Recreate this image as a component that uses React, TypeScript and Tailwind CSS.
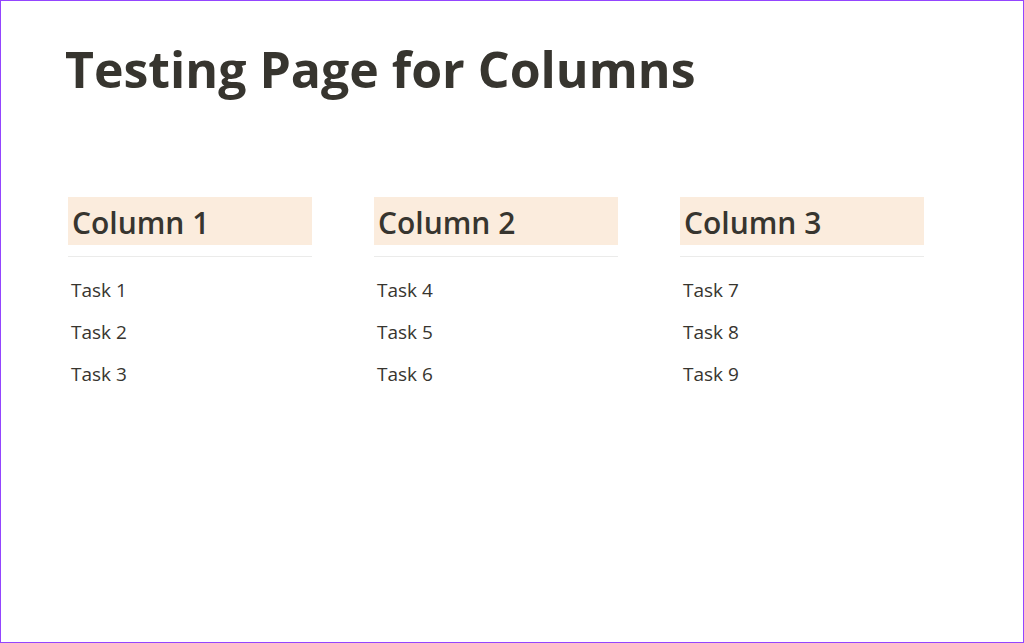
export default function App() {
	const columns = [
		{ title: 'Column 1', tasks: ['Task 1', 'Task 2', 'Task 3'] },
		{ title: 'Column 2', tasks: ['Task 4', 'Task 5', 'Task 6'] },
		{ title: 'Column 3', tasks: ['Task 7', 'Task 8', 'Task 9'] },
	]

	return (
		<div
			className="w-[1024px] h-[643px] bg-white border-[1.5px] border-[#9445ff] text-[#37352f] overflow-hidden"
			style={{ fontFamily: '"Open Sans", "Noto Sans", sans-serif' }}
		>
			<div className="pl-[64px] pt-[38px]">
				<h1 className="text-[50px] font-bold leading-[1.2]">Testing Page for Columns</h1>
			</div>

			<div className="flex gap-[62px] pl-[67px] pt-[98px]">
				{columns.map((col) => (
					<div key={col.title} className="w-[244px]">
						<div className="h-[48px] bg-[#fbecdd] flex items-center px-[4px] pt-[4px]">
							<h2 className="text-[30px] font-semibold leading-none">{col.title}</h2>
						</div>
						<div className="mt-[11px] h-px bg-[#ebebea]" />
						<ul className="mt-[21px] px-[3px] flex flex-col gap-[18px]">
							{col.tasks.map((t) => (
								<li key={t} className="text-[19px] leading-[24px]">
									{t}
								</li>
							))}
						</ul>
					</div>
				))}
			</div>
		</div>
	)
}
